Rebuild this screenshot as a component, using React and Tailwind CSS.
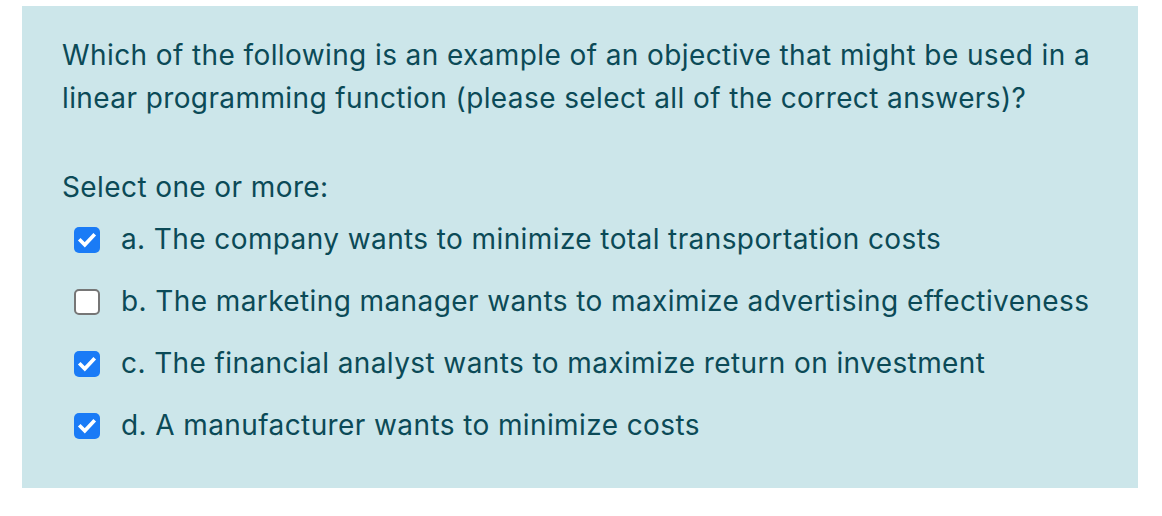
const options = [
  { label: "a. The company wants to minimize total transportation costs", checked: true },
  { label: "b. The marketing manager wants to maximize advertising effectiveness", checked: false },
  { label: "c. The financial analyst wants to maximize return on investment", checked: true },
  { label: "d. A manufacturer wants to minimize costs", checked: true },
];

function Box({ checked }) {
  if (!checked) {
    return <span className="w-[26px] h-[26px] shrink-0 rounded-[5px] border-2 border-[#767676] bg-white" />;
  }
  return (
    <span className="w-[26px] h-[26px] shrink-0 rounded-[5px] bg-[#1a7bf6] block">
      <svg viewBox="0 0 26 26" className="w-[26px] h-[26px]">
        <path d="M6.5 13.5 L10.8 17.8 L19.5 8.5" fill="none" stroke="white" strokeWidth="3.6" strokeLinecap="square" />
      </svg>
    </span>
  );
}

export default function App() {
  return (
    <div className="min-h-screen bg-white pt-[6px] px-[22px] text-[#0b4a57]" style={{ fontFamily: "Inter, 'Noto Sans', sans-serif" }}>
      <div className="bg-[#cce6ea] pl-[40px] pr-[20px] pt-[28px] pb-[41px] w-[1116px] text-[28px] leading-[43px] tracking-[0.4px]">
        <p className="max-w-[1040px]">
          Which of the following is an example of an objective that might be used in a linear programming function (please select all of the correct answers)?
        </p>
        <p className="mt-[46px]">Select one or more:</p>
        <div className="flex flex-col gap-[19px] mt-[9px] pl-[12px]">
          {options.map((o) => (
            <div key={o.label} className="flex items-center gap-[21px]">
              <Box checked={o.checked} />
              <span>{o.label}</span>
            </div>
          ))}
        </div>
      </div>
    </div>
  );
}
